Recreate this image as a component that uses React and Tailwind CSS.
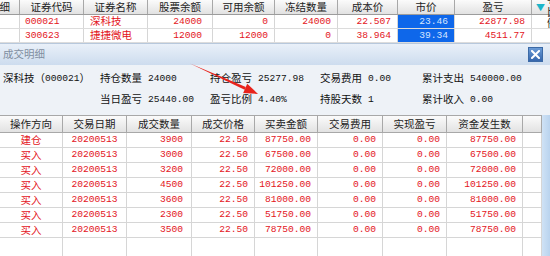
import React from 'react';

const cjk = "font-['Noto_Sans_CJK_SC',sans-serif] text-[10.5px]";
const mono = "font-['Liberation_Mono',monospace] text-[9.6px]";
const red = 'text-[#e3141c]';

const topCols = [
    { w: 'w-[40px] -ml-[20px]', title: '明细' },
    { w: 'w-[64px]', title: '证券代码' },
    { w: 'w-[64px]', title: '证券名称' },
    { w: 'w-[65px]', title: '股票余额' },
    { w: 'w-[62px]', title: '可用余额' },
    { w: 'w-[63px]', title: '冻结数量' },
    { w: 'w-[60px]', title: '成本价' },
    { w: 'w-[57px]', title: '市价' },
    { w: 'w-[77px]', title: '盈亏' },
];

const holdings = [
    { code: '000021', name: '深科技', qty: '24000', avail: '0', frozen: '24000', cost: '22.507', price: '23.46', pnl: '22877.98' },
    { code: '300623', name: '捷捷微电', qty: '12000', avail: '12000', frozen: '0', cost: '38.964', price: '39.34', pnl: '4511.77' },
];

const tradeCols = [
    { w: 'w-[63px]', title: '操作方向' },
    { w: 'w-[64px]', title: '交易日期' },
    { w: 'w-[65px]', title: '成交数量' },
    { w: 'w-[63px]', title: '成交价格' },
    { w: 'w-[63px]', title: '买卖金额' },
    { w: 'w-[65px]', title: '交易费用' },
    { w: 'w-[64px]', title: '实现盈亏' },
    { w: 'w-[76px]', title: '资金发生数' },
    { w: 'w-[19px]', title: '' },
];

const trades = [
    ['建仓', '3900', '87750.00'],
    ['买入', '3000', '67500.00'],
    ['买入', '3200', '72000.00'],
    ['买入', '4500', '101250.00'],
    ['买入', '3600', '81000.00'],
    ['买入', '2300', '51750.00'],
    ['买入', '3500', '78750.00'],
];

function HeadCell({ w, children, h = 'h-[14px]' }) {
    return (
        <div className={`${w} ${h} shrink-0 flex items-center justify-center border-r border-[#a8a8a8] bg-linear-to-b from-[#fbfbfb] to-[#e2e2e2] text-[#222] ${cjk} leading-none`}>
            {children}
        </div>
    );
}

function Cell({ w, align = 'end', children, className = '' }) {
    const j = align === 'end' ? 'justify-end pr-[6px]' : align === 'start' ? 'justify-start pl-[5px]' : 'justify-center';
    return (
        <div className={`${w} h-full shrink-0 flex items-center ${j} border-r border-[#d6d6d6] leading-none ${className}`}>
            {children}
        </div>
    );
}

function Info({ label, value, w }) {
    return (
        <div className={`${w} flex items-center gap-[6px] shrink-0`}>
            <span className={`${cjk} text-[#111] leading-none`}>{label}</span>
            <span className={`${mono} text-[#111] leading-none`}>{value}</span>
        </div>
    );
}

export default function App() {
    return (
        <div className="relative w-[550px] h-[256px] overflow-hidden bg-white flex flex-col">
            {/* holdings table */}
            <div className="flex h-[15px] border-b border-[#9c9c9c] shrink-0">
                {topCols.map((c) => (
                    <HeadCell key={c.title} w={c.w}>{c.title}</HeadCell>
                ))}
                <div className={`flex-1 h-[14px] flex items-center pl-[4px] gap-[2px] bg-linear-to-b from-[#fbfbfb] to-[#e2e2e2] ${cjk} leading-none text-[#222]`}>
                    <span className="text-[#1db5c9] text-[9px]">▼</span>
                    <span>盈亏比例</span>
                </div>
            </div>
            {holdings.map((r) => (
                <div key={r.code} className={`flex h-[14px] border-b border-[#dcdcdc] shrink-0 ${red}`}>
                    <Cell w="w-[20px]" />
                    <Cell w="w-[64px]" align="start" className={mono}>{r.code}</Cell>
                    <Cell w="w-[64px]" align="start" className={`${cjk} pl-[6px]`}>{r.name}</Cell>
                    <Cell w="w-[65px]" className={`${mono} pr-[10px]`}>{r.qty}</Cell>
                    <Cell w="w-[62px]" className={mono}>{r.avail}</Cell>
                    <Cell w="w-[63px]" className={mono}>{r.frozen}</Cell>
                    <Cell w="w-[60px]" className={mono}>{r.cost}</Cell>
                    <Cell w="w-[57px]" className={`${mono} bg-[#0e67ea] text-[#d6e6ff]`}>{r.price}</Cell>
                    <Cell w="w-[77px]" className={mono}>{r.pnl}</Cell>
                    <div className="flex-1" />
                </div>
            ))}

            {/* detail dialog */}
            <div className="flex-1 flex flex-col border-t border-[#b7c8dc] bg-[#eef2f7]">
                <div className="h-[21px] shrink-0 flex items-center pl-[3px] pr-[7px] bg-linear-to-b from-[#e9f0f9] to-[#cddcee]">
                    <span className={`${cjk} text-[#7f8ea0] leading-none`}>成交明细</span>
                    <div className="ml-auto w-[15px] h-[15px] flex items-center justify-center border border-[#3c6aa6] bg-linear-to-b from-[#6b9bd6] to-[#3566ac]">
                        <svg width="9" height="9" viewBox="0 0 9 9">
                            <path d="M1 1L8 8M8 1L1 8" stroke="#fff" strokeWidth="2" strokeLinecap="square" />
                        </svg>
                    </div>
                </div>

                <div className="shrink-0 pt-[3px] pb-[5px]">
                    <div className="flex h-[21px] items-center">
                        <div className="w-[100px] pl-[3px] flex items-center shrink-0 leading-none text-[#111]">
                            <span className={cjk}>深科技（</span>
                            <span className={mono}>000021</span>
                            <span className={cjk}>）</span>
                        </div>
                        <Info w="w-[110px]" label="持仓数量" value="24000" />
                        <Info w="w-[110px]" label="持仓盈亏" value="25277.98" />
                        <Info w="w-[102px]" label="交易费用" value="0.00" />
                        <Info w="w-[120px]" label="累计支出" value="540000.00" />
                    </div>
                    <div className="flex h-[21px] items-center">
                        <div className="w-[100px] shrink-0" />
                        <Info w="w-[110px]" label="当日盈亏" value="25440.00" />
                        <Info w="w-[110px]" label="盈亏比例" value="4.40%" />
                        <Info w="w-[102px]" label="持股天数" value="1" />
                        <Info w="w-[120px]" label="累计收入" value="0.00" />
                    </div>
                </div>

                <div className="flex-1 flex">
                    <div className="w-[542px] flex flex-col bg-white">
                        <div className="flex h-[18px] shrink-0 border-t border-b border-[#a8a8a8]">
                            {tradeCols.map((c, i) => (
                                <HeadCell key={i} w={c.w} h="h-full">{c.title}</HeadCell>
                            ))}
                        </div>
                        {trades.map((t, i) => (
                            <div key={i} className={`flex h-[15px] shrink-0 border-b border-[#d6d6d6] ${red}`}>
                                <Cell w="w-[63px]" align="center" className={cjk}>{t[0]}</Cell>
                                <Cell w="w-[64px]" align="center" className={mono}>20200513</Cell>
                                <Cell w="w-[65px]" className={`${mono} pr-[8px]`}>{t[1]}</Cell>
                                <Cell w="w-[63px]" className={mono}>22.50</Cell>
                                <Cell w="w-[63px]" className={mono}>{t[2]}</Cell>
                                <Cell w="w-[65px]" className={mono}>0.00</Cell>
                                <Cell w="w-[64px]" className={mono}>0.00</Cell>
                                <Cell w="w-[76px]" className={mono}>{t[2]}</Cell>
                                <Cell w="w-[19px]" />
                            </div>
                        ))}
                        <div className="flex-1 flex">
                            {tradeCols.map((c, i) => (
                                <Cell key={i} w={c.w} />
                            ))}
                        </div>
                    </div>
                    <div className="flex-1 bg-linear-to-r from-[#cfe2f5] to-[#b9d3ee]" />
                </div>
            </div>

            {/* annotation arrow */}
            <svg className="absolute left-0 top-0 pointer-events-none" width="550" height="256">
                <polygon points="190,63.5 245.8,86.9 244.6,89.7" fill="#e8231c" />
                <polygon points="258,94 243.2,92.9 247.2,83.7" fill="#e8231c" />
            </svg>
        </div>
    );
}
